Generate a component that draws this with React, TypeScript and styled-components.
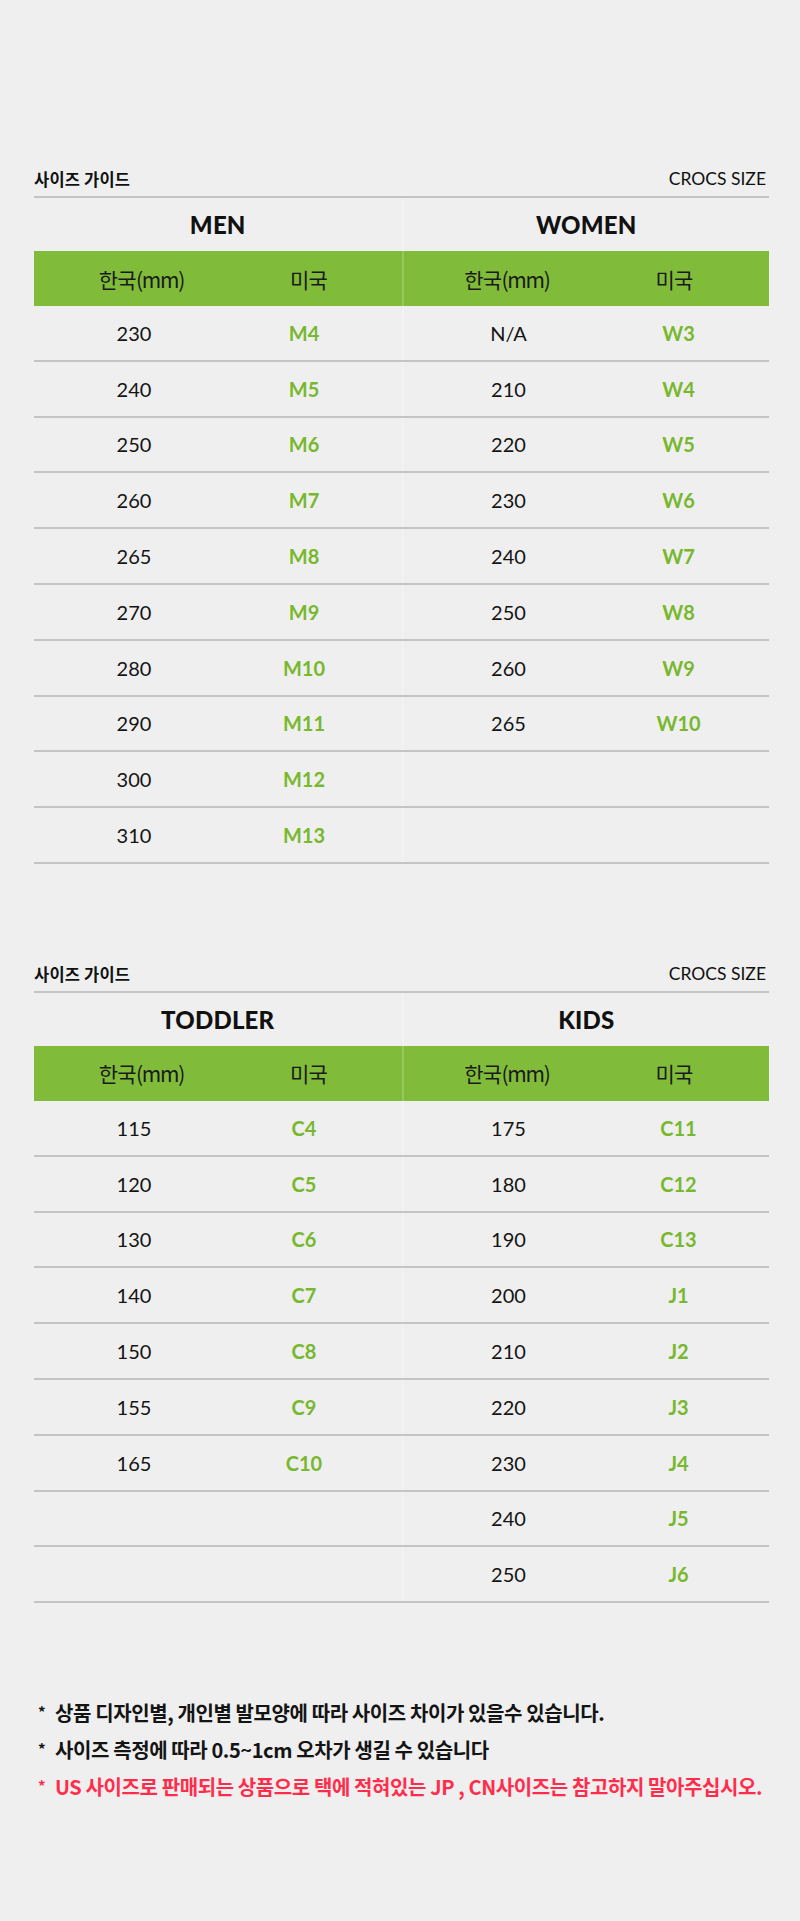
import styled, { createGlobalStyle } from 'styled-components';

const GlobalStyle = createGlobalStyle`
    html, body {
        margin: 0;
        padding: 0;
        background: #efefef;
    }
    * {
        box-sizing: border-box;
    }
`;

const LATIN = `Lato, 'Noto Sans CJK KR', sans-serif`;
const KOREAN = `'Noto Sans CJK KR', 'Noto Sans', sans-serif`;
const LINE = '#c4c4c4';
const GREEN = '#80bc3a';
const GREEN_TEXT = '#78b82e';

const Page = styled.div`
    width: 800px;
    min-height: 1921px;
    background: #efefef;
    padding: 170px 31px 0 34px;
    color: #111;
`;

const Section = styled.section`
    & + & {
        margin-top: 101px;
    }
`;

const TitleBar = styled.div`
    display: flex;
    justify-content: space-between;
    align-items: flex-end;
    padding-bottom: 8px;
    line-height: 18px;
`;

const Title = styled.h2`
    margin: 0;
    font-family: ${KOREAN};
    font-size: 16.5px;
    font-weight: 700;
    letter-spacing: 0.2px;
    color: #111;
`;

const Caption = styled.span`
    font-family: ${LATIN};
    font-size: 17.5px;
    color: #111;
    margin-right: 3px;
`;

const Table = styled.div`
    border-top: 2px solid ${LINE};
`;

const Row = styled.div<{ $height: number; $line?: boolean }>`
    display: grid;
    grid-template-columns: 1fr 1fr;
    height: ${(p) => p.$height}px;
    border-bottom: ${(p) => (p.$line ? `2px solid ${LINE}` : 'none')};
`;

const GreenRow = styled(Row)`
    background: ${GREEN};
`;

const Half = styled.div<{ $divider?: string }>`
    display: flex;
    align-items: center;
    justify-content: center;
    & + & {
        border-left: 2px solid ${(p) => p.$divider || LINE};
    }
`;

const Pair = styled(Half)<{ $head?: boolean }>`
    display: grid;
    grid-template-columns: ${(p) => (p.$head ? '167px 167px' : '170px 170px')};
    justify-content: start;
    padding-left: ${(p) => (p.$head ? 24 : 15)}px;
    text-align: center;
    & + & {
        padding-left: ${(p) => (p.$head ? 28 : 20)}px;
    }
`;

const GroupName = styled.span`
    font-family: ${LATIN};
    font-size: 24px;
    font-weight: 900;
    letter-spacing: 0.2px;
    color: #111;
`;

const HeadLabel = styled.span`
    font-family: ${KOREAN};
    font-size: 21px;
    font-weight: 400;
    letter-spacing: -0.8px;
    color: #1a1a1a;
`;

const Millimeter = styled.span`
    letter-spacing: -1.2px;
`;

const Korean = styled.span`
    font-family: ${LATIN};
    font-size: 20px;
    color: #141414;
`;

const UsSize = styled.span`
    font-family: ${LATIN};
    font-size: 20px;
    font-weight: 700;
    color: ${GREEN_TEXT};
`;

const Notes = styled.ul`
    list-style: none;
    margin: 91px 0 0 4px;
    padding: 0;
`;

const Note = styled.li<{ $alert?: boolean }>`
    display: flex;
    align-items: center;
    height: 37px;
    font-family: ${KOREAN};
    font-size: 20px;
    font-weight: 700;
    letter-spacing: -0.4px;
    white-space: nowrap;
    color: ${(p) => (p.$alert ? '#ff2d4b' : '#141414')};
`;

const Star = styled.span`
    width: 17px;
    font-size: 15px;
    position: relative;
    top: -1px;
`;

type SizeRow = [string, string] | null;

type GuideProps = {
    left: string;
    right: string;
    leftRows: SizeRow[];
    rightRows: SizeRow[];
};

const Cells = ({ row }: { row: SizeRow }) =>
    row ? (
        <>
            <Korean>{row[0]}</Korean>
            <UsSize>{row[1]}</UsSize>
        </>
    ) : null;

const SubHeader = () => (
    <>
        <HeadLabel>
            한국<Millimeter>(mm)</Millimeter>
        </HeadLabel>
        <HeadLabel>미국</HeadLabel>
    </>
);

const SizeGuide = ({ left, right, leftRows, rightRows }: GuideProps) => {
    const count = Math.max(leftRows.length, rightRows.length);
    return (
        <Section>
            <TitleBar>
                <Title>사이즈 가이드</Title>
                <Caption>CROCS SIZE</Caption>
            </TitleBar>
            <Table>
                <Row $height={53}>
                    <Half>
                        <GroupName>{left}</GroupName>
                    </Half>
                    <Half>
                        <GroupName>{right}</GroupName>
                    </Half>
                </Row>
                <GreenRow $height={55}>
                    <Pair $head>
                        <SubHeader />
                    </Pair>
                    <Pair $head $divider="rgba(255,255,255,0.18)">
                        <SubHeader />
                    </Pair>
                </GreenRow>
                {Array.from({ length: count }).map((_, i) => (
                    <Row key={i} $height={55.8} $line>
                        <Pair>
                            <Cells row={leftRows[i] ?? null} />
                        </Pair>
                        <Pair>
                            <Cells row={rightRows[i] ?? null} />
                        </Pair>
                    </Row>
                ))}
            </Table>
        </Section>
    );
};

const men: SizeRow[] = [
    ['230', 'M4'],
    ['240', 'M5'],
    ['250', 'M6'],
    ['260', 'M7'],
    ['265', 'M8'],
    ['270', 'M9'],
    ['280', 'M10'],
    ['290', 'M11'],
    ['300', 'M12'],
    ['310', 'M13'],
];

const women: SizeRow[] = [
    ['N/A', 'W3'],
    ['210', 'W4'],
    ['220', 'W5'],
    ['230', 'W6'],
    ['240', 'W7'],
    ['250', 'W8'],
    ['260', 'W9'],
    ['265', 'W10'],
];

const toddler: SizeRow[] = [
    ['115', 'C4'],
    ['120', 'C5'],
    ['130', 'C6'],
    ['140', 'C7'],
    ['150', 'C8'],
    ['155', 'C9'],
    ['165', 'C10'],
];

const kids: SizeRow[] = [
    ['175', 'C11'],
    ['180', 'C12'],
    ['190', 'C13'],
    ['200', 'J1'],
    ['210', 'J2'],
    ['220', 'J3'],
    ['230', 'J4'],
    ['240', 'J5'],
    ['250', 'J6'],
];

const App = () => {
    return (
        <>
            <GlobalStyle />
            <Page>
                <SizeGuide left="MEN" right="WOMEN" leftRows={men} rightRows={women} />
                <SizeGuide left="TODDLER" right="KIDS" leftRows={toddler} rightRows={kids} />
                <Notes>
                    <Note>
                        <Star>*</Star>상품 디자인별, 개인별 발모양에 따라 사이즈 차이가 있을수 있습니다.
                    </Note>
                    <Note>
                        <Star>*</Star>사이즈 측정에 따라 0.5~1cm 오차가 생길 수 있습니다
                    </Note>
                    <Note $alert>
                        <Star>*</Star>US 사이즈로 판매되는 상품으로 택에 적혀있는 JP , CN사이즈는 참고하지 말아주십시오.
                    </Note>
                </Notes>
            </Page>
        </>
    );
};

export default App;
